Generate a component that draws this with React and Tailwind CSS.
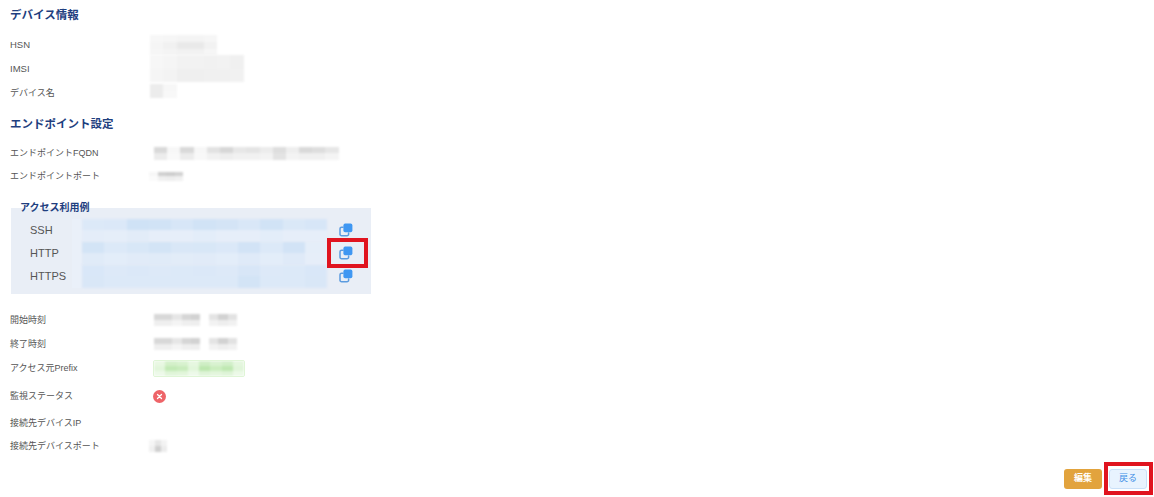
const FONT = "font-['Liberation_Sans','Noto_Sans_CJK_JP',sans-serif]";

// tiles for the blurred values, each row is a list of colours
const W = '#ffffff';
const HSN = [
  ['#f7f7f7', '#f6f6f6', '#f4f4f4', '#f4f4f4', '#f6f6f6'],
  ['#f5f5f5', '#f1f1f1', '#e9e9e9', '#e9e9e9', '#f2f2f2'],
  ['#f6f6f6', '#f4f4f4', '#f2f2f2', '#f2f2f2', '#f6f6f6'],
];
const IMSI = [
  ['#f7f7f7', '#f5f5f5', '#f2f2f2', '#f2f2f2', '#f1f1f1', '#f2f2f2', '#f0f0f0'],
  ['#f5f5f5', '#f3f3f3', '#efefef', '#efefef', '#f0f0f0', '#f0f0f0', '#f1f1f1'],
];
const NAME = [['#ececec', '#f7f7f7'], ['#ececec', '#f8f8f8']];
const FQDN = [
  ['#d9d9d9', '#f7f7f7', '#d9d9d9', '#f7f7f7', '#e2e2e2', '#d7d7d7', '#e7e7e7', '#e4e4e4', '#ececec', '#dedede', '#eeeeee', '#d9d9d9', '#dddddd', '#e6e6e6'],
  ['#ececec', '#f9f9f9', '#ececec', '#f8f8f8', '#f1f1f1', '#eeeeee', '#f1f1f1', '#f1f1f1', '#f3f3f3', '#e3e3e3', '#f3f3f3', '#f0f0f0', '#f0f0f0', '#f4f4f4'],
];
const PORT = [['#f7f7f7', '#cfcfcf', '#cccccc', '#d2d2d2'], ['#fbfbfb', '#f0f0f0', '#eeeeee', '#f1f1f1']];
const TIME = [
  ['#d8d8d8', '#d8d8d8', '#e6e6e6', '#d6d6d6', '#d2d2d2', W, '#e4e4e4', '#d2d2d2', '#e2e2e2'],
  ['#efefef', '#efefef', '#f4f4f4', '#efefef', '#eeeeee', W, '#f2f2f2', '#eeeeee', '#f1f1f1'],
];
const PREFIX = [
  ['#e9f8e3', '#d4f0ca', '#d8f2cf', '#e6f7e0', '#cfeec5', '#d9f2d1', '#d2efc9', '#e4f6de'],
  ['#e2f6db', '#c3eab6', '#c9ecbd', '#e2f6db', '#bde7af', '#cbeebf', '#bfe8b2', '#e0f5d9'],
  ['#edf9e9', '#e0f5d9', '#e2f6db', '#edf9e9', '#dff4d8', '#e3f6dc', '#dff4d8', '#ecf9e7'],
];
const PORT2 = [['#f5f5f5', '#e6e6e6', '#f3f3f3'], ['#f0f0f0', '#cfcfcf', '#ececec']];
const SSH = [
  ['#dce9f8', '#dbe8f8', '#cfe2f6', '#d1e3f6', '#d7e6f7', '#d1e3f6', '#d4e4f6', '#d9e7f7', '#d1e3f6', '#dae8f7', '#d7e6f7'],
  ['#e4edf9', '#e5eef9', '#e2ecf8', '#e6eef9', '#e6eef9', '#e3edf9', '#e6eef9', '#e6eef9', '#e3edf9', '#e6eef9', '#e6eef9'],
];
const HTTP = [
  ['#d3e4f6', '#dce9f8', '#d8e7f7', '#d3e4f6', '#d9e7f7', '#d8e7f7', '#dbe8f8', '#d2e3f6', '#dce9f8', '#d2e3f6', '#e5eef9'],
  ['#e0ebf8', '#e3edf9', '#e1ebf8', '#e0ebf8', '#e2ecf8', '#e1ebf8', '#e3edf9', '#dfeaf8', '#e3edf9', '#dfeaf8', '#e6eef9'],
];
const HTTPS = [
  ['#d9e7f8', '#dde9f8', '#dbe8f8', '#dde9f8', '#dce9f8', '#dbe8f8', '#dde9f8', '#d8e6f7', '#dde9f8', '#dce9f8', '#d9e7f8'],
  ['#d9e7f7', '#dce9f8', '#dce9f8', '#dce9f8', '#dce9f8', '#dce9f8', '#dce9f8', '#d3e4f6', '#dce9f8', '#dce9f8', '#d9e7f7'],
];

function Mosaic({ tiles, tile, height, className = '' }) {
  return (
    <div className={`flex flex-col blur-[1px] ${className}`}>
      {tiles.map((row, i) => (
        <div key={i} className="flex">
          {row.map((c, j) => (
            <div key={j} style={{ background: c, width: tile, height }} />
          ))}
        </div>
      ))}
    </div>
  );
}

function Heading({ children, className = '' }) {
  return (
    <h2 className={`h-[30px] flex items-center pl-[10px] text-[11.5px] font-bold text-[#1f3f7f] ${className}`}>
      {children}
    </h2>
  );
}

function Row({ label, h, latin, children }) {
  return (
    <div className="flex items-center pl-[10px]" style={{ height: h }}>
      <span className={`w-[140px] shrink-0 text-[#555555] ${latin ? 'text-[9.5px]' : 'pt-[2px] text-[9px]'}`}>{label}</span>
      {children}
    </div>
  );
}

function CopyIcon() {
  return (
    <svg width="14" height="14" viewBox="0 0 14 14" className="shrink-0">
      <path d="M4 4.2H2.6A1.6 1.6 0 0 0 1 5.8v5.4a1.6 1.6 0 0 0 1.6 1.6H8a1.6 1.6 0 0 0 1.6-1.6V10" fill="none" stroke="#5b9bdf" strokeWidth="1.5" strokeLinecap="round" />
      <rect x="4.4" y="0.6" width="9" height="8.6" rx="1.8" fill="#3f97f2" />
    </svg>
  );
}

function AccessRow({ label, tiles, h }) {
  return (
    <div className="flex items-center" style={{ height: h }}>
      <span className="w-[61px] pl-[19px] shrink-0 text-[11px] text-[#555555]">{label}</span>
      <div className="w-[10px] h-[23px] bg-[#eaf0f9] shrink-0" />
      <Mosaic tiles={tiles} tile={22.3} height={11.5} />
      <div className="ml-[12px]"><CopyIcon /></div>
    </div>
  );
}

export default function App() {
  return (
    <div className={`relative w-[1154px] h-[497px] bg-white overflow-hidden ${FONT}`}>
      <Heading className="pt-[2px]">デバイス情報</Heading>
      <div className="mt-[3.5px]">
        <Row label="HSN" latin h={23.5}><Mosaic tiles={HSN} tile={13.4} height={6.6} /></Row>
        <Row label="IMSI" latin h={23.5}><Mosaic tiles={IMSI} tile={13.4} height={13.5} /></Row>
        <Row label="デバイス名" h={23.5}><Mosaic tiles={NAME} tile={13.4} height={7} className="-mt-[3px]" /></Row>
      </div>

      <Heading className="mt-[4px] pt-[3px]">エンドポイント設定</Heading>
      <div className="mt-[3.5px]">
        <Row label="エンドポイントFQDN" h={23}><Mosaic tiles={FQDN} tile={13.2} height={6.5} className="ml-[4px]" /></Row>
        <Row label="エンドポイントポート" h={23}><Mosaic tiles={PORT} tile={8.5} height={4.5} className="-ml-[1px]" /></Row>
      </div>

      {/* access examples */}
      <div className="relative mt-[20.5px] ml-[11px] w-[360px] h-[86px] bg-[#e9eef6] pt-[10.5px]">
        <span className="absolute left-[9px] -top-[7px] text-[10px] font-bold leading-[14px] text-[#1f3f7f]">アクセス利用例</span>
        <AccessRow label="SSH" tiles={SSH} h={23} />
        <AccessRow label="HTTP" tiles={HTTP} h={23} />
        <AccessRow label="HTTPS" tiles={HTTPS} h={23} />
      </div>

      <div className="mt-[14px]">
        <Row label="開始時刻" h={24}><Mosaic tiles={TIME} tile={9.2} height={6} className="ml-[4px]" /></Row>
        <Row label="終了時刻" h={24}><Mosaic tiles={TIME} tile={9.2} height={6} className="ml-[4px]" /></Row>
        <Row label="アクセス元Prefix" h={24}>
          <div className="ml-[3px] rounded-[2px] border border-[#dff5d6] overflow-hidden">
            <Mosaic tiles={PREFIX} tile={11.3} height={5} />
          </div>
        </Row>
        <Row label="監視ステータス" h={32}>
          <div className="ml-[3px] w-[13px] h-[13px] rounded-full bg-[#ee6468] flex items-center justify-center">
            <svg width="7" height="7" viewBox="0 0 7 7">
              <path d="M1.5 1.5l4 4M5.5 1.5l-4 4" stroke="#ffffff" strokeWidth="1.3" strokeLinecap="round" />
            </svg>
          </div>
        </Row>
        <Row label="接続先デバイスIP" h={22} />
        <Row label="接続先デバイスポート" h={24}><Mosaic tiles={PORT2} tile={6} height={6} className="-ml-[1px]" /></Row>
      </div>

      <div className="mt-[11px] flex justify-end gap-[7px] pr-[7px]">
        <button className="w-[38px] h-[20px] rounded-[3px] bg-[#e2a33d] text-[9px] font-bold text-white">編集</button>
        <button className="w-[38px] h-[20px] rounded-[3px] bg-[#e8f3fe] border border-[#c9e0f8] text-[9px] text-[#3f8fe6]">戻る</button>
      </div>

      {/* red annotation boxes */}
      <div className="absolute left-[327px] top-[238px] w-[41px] h-[30px] border-[4px] border-[#e0141f]" />
      <div className="absolute left-[1104px] top-[462px] w-[49px] h-[33px] border-[4px] border-[#e0141f]" />
    </div>
  );
}
